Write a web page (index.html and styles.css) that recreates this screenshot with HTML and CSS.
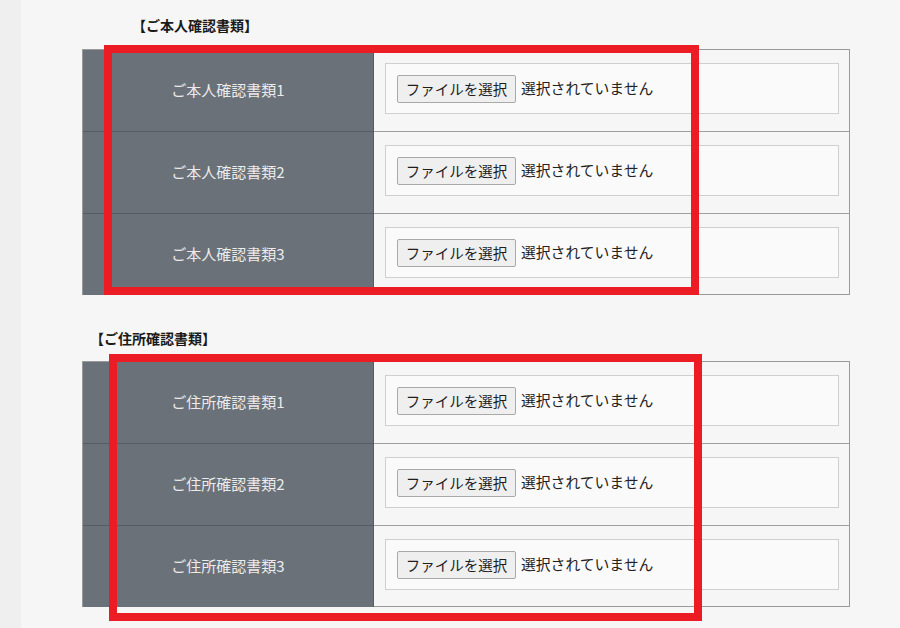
FILE: index.html
```html
<!DOCTYPE html>
<html lang="ja">
<head>
<meta charset="utf-8">
<title>書類アップロード</title>
<link rel="stylesheet" href="styles.css">
</head>
<body>
<div class="page">
  <div class="side-strip"></div>
  <main class="content">
    <section class="section section-id">
      <h2 class="section-title title-id">【ご本人確認書類】</h2>
      <div class="doc-table">
        <div class="doc-row">
          <div class="doc-label">ご本人確認書類1</div>
          <div class="doc-cell"><div class="file-box"><button class="file-btn" type="button">ファイルを選択</button><span class="file-status">選択されていません</span></div></div>
        </div>
        <div class="doc-row">
          <div class="doc-label">ご本人確認書類2</div>
          <div class="doc-cell"><div class="file-box"><button class="file-btn" type="button">ファイルを選択</button><span class="file-status">選択されていません</span></div></div>
        </div>
        <div class="doc-row">
          <div class="doc-label">ご本人確認書類3</div>
          <div class="doc-cell"><div class="file-box"><button class="file-btn" type="button">ファイルを選択</button><span class="file-status">選択されていません</span></div></div>
        </div>
      </div>
    </section>
    <section class="section section-addr">
      <h2 class="section-title title-addr">【ご住所確認書類】</h2>
      <div class="doc-table">
        <div class="doc-row">
          <div class="doc-label">ご住所確認書類1</div>
          <div class="doc-cell"><div class="file-box"><button class="file-btn" type="button">ファイルを選択</button><span class="file-status">選択されていません</span></div></div>
        </div>
        <div class="doc-row">
          <div class="doc-label">ご住所確認書類2</div>
          <div class="doc-cell"><div class="file-box"><button class="file-btn" type="button">ファイルを選択</button><span class="file-status">選択されていません</span></div></div>
        </div>
        <div class="doc-row">
          <div class="doc-label">ご住所確認書類3</div>
          <div class="doc-cell"><div class="file-box"><button class="file-btn" type="button">ファイルを選択</button><span class="file-status">選択されていません</span></div></div>
        </div>
      </div>
    </section>
  </main>
  <div class="highlight highlight-1"></div>
  <div class="highlight highlight-2"></div>
</div>
</body>
</html>
```
FILE: styles.css
```css
html, body {
  margin: 0;
  padding: 0;
}
body {
  background: #f6f6f6;
  font-family: "Noto Sans CJK JP", "Noto Sans", sans-serif;
  color: #222;
}
.page {
  position: relative;
  display: flex;
  width: 900px;
  height: 628px;
  overflow: hidden;
}
.side-strip {
  width: 21px;
  flex: none;
  background: #efefef;
}
.content {
  flex: none;
  width: 768px;
  padding: 15px 0 0 61px;
}
.section-title {
  margin: 0;
  font-size: 14px;
  line-height: 20px;
  font-weight: bold;
  color: #1a1a1a;
  letter-spacing: 0;
}
.title-id {
  margin-left: 50px;
  margin-bottom: 14px;
}
.section-addr {
  margin-top: 33px;
}
.title-addr {
  margin-left: 8px;
  margin-bottom: 13px;
}
.doc-table {
  border: 1px solid #9a9a9a;
  background: #f6f6f6;
}
.doc-row {
  display: grid;
  grid-template-columns: 291px 1fr;
  height: 81px;
  border-bottom: 1px solid #a0a0a0;
}
.doc-row:last-child {
  border-bottom: none;
  height: 80px;
}
.doc-row + .doc-row .doc-label {
  border-top: 1px solid #575c63;
  margin-top: -1px;
}
.doc-label {
  background: #6b7179;
  border-right: 1px solid #575c63;
  color: #ebebeb;
  font-size: 15px;
  display: flex;
  align-items: center;
  justify-content: center;
  padding-bottom: 3px;
}
.doc-cell {
  padding: 13px 10px 17px 11px;
}
.file-box {
  height: 49px;
  border: 1px solid #cfcfcf;
  background: #fafafa;
  display: flex;
  align-items: center;
  padding-left: 11px;
}
.file-btn {
  width: 119px;
  height: 28px;
  margin: 0;
  padding: 0 0 1px;
  border: 1px solid #a9a9a9;
  border-radius: 2px;
  background: #efefef;
  color: #1e1e1e;
  font-family: "Noto Sans CJK JP", "Noto Sans", sans-serif;
  font-size: 14.5px;
  line-height: 25px;
}
.file-status {
  margin-left: 5px;
  font-size: 14.8px;
  color: #222;
  position: relative;
  top: -1px;
}
.highlight {
  position: absolute;
  border: 8px solid #ec1c24;
  box-sizing: border-box;
  pointer-events: none;
}
.highlight-1 {
  left: 104px;
  top: 45px;
  width: 595px;
  height: 250px;
}
.highlight-2 {
  left: 109px;
  top: 354px;
  width: 593px;
  height: 267px;
}
```
